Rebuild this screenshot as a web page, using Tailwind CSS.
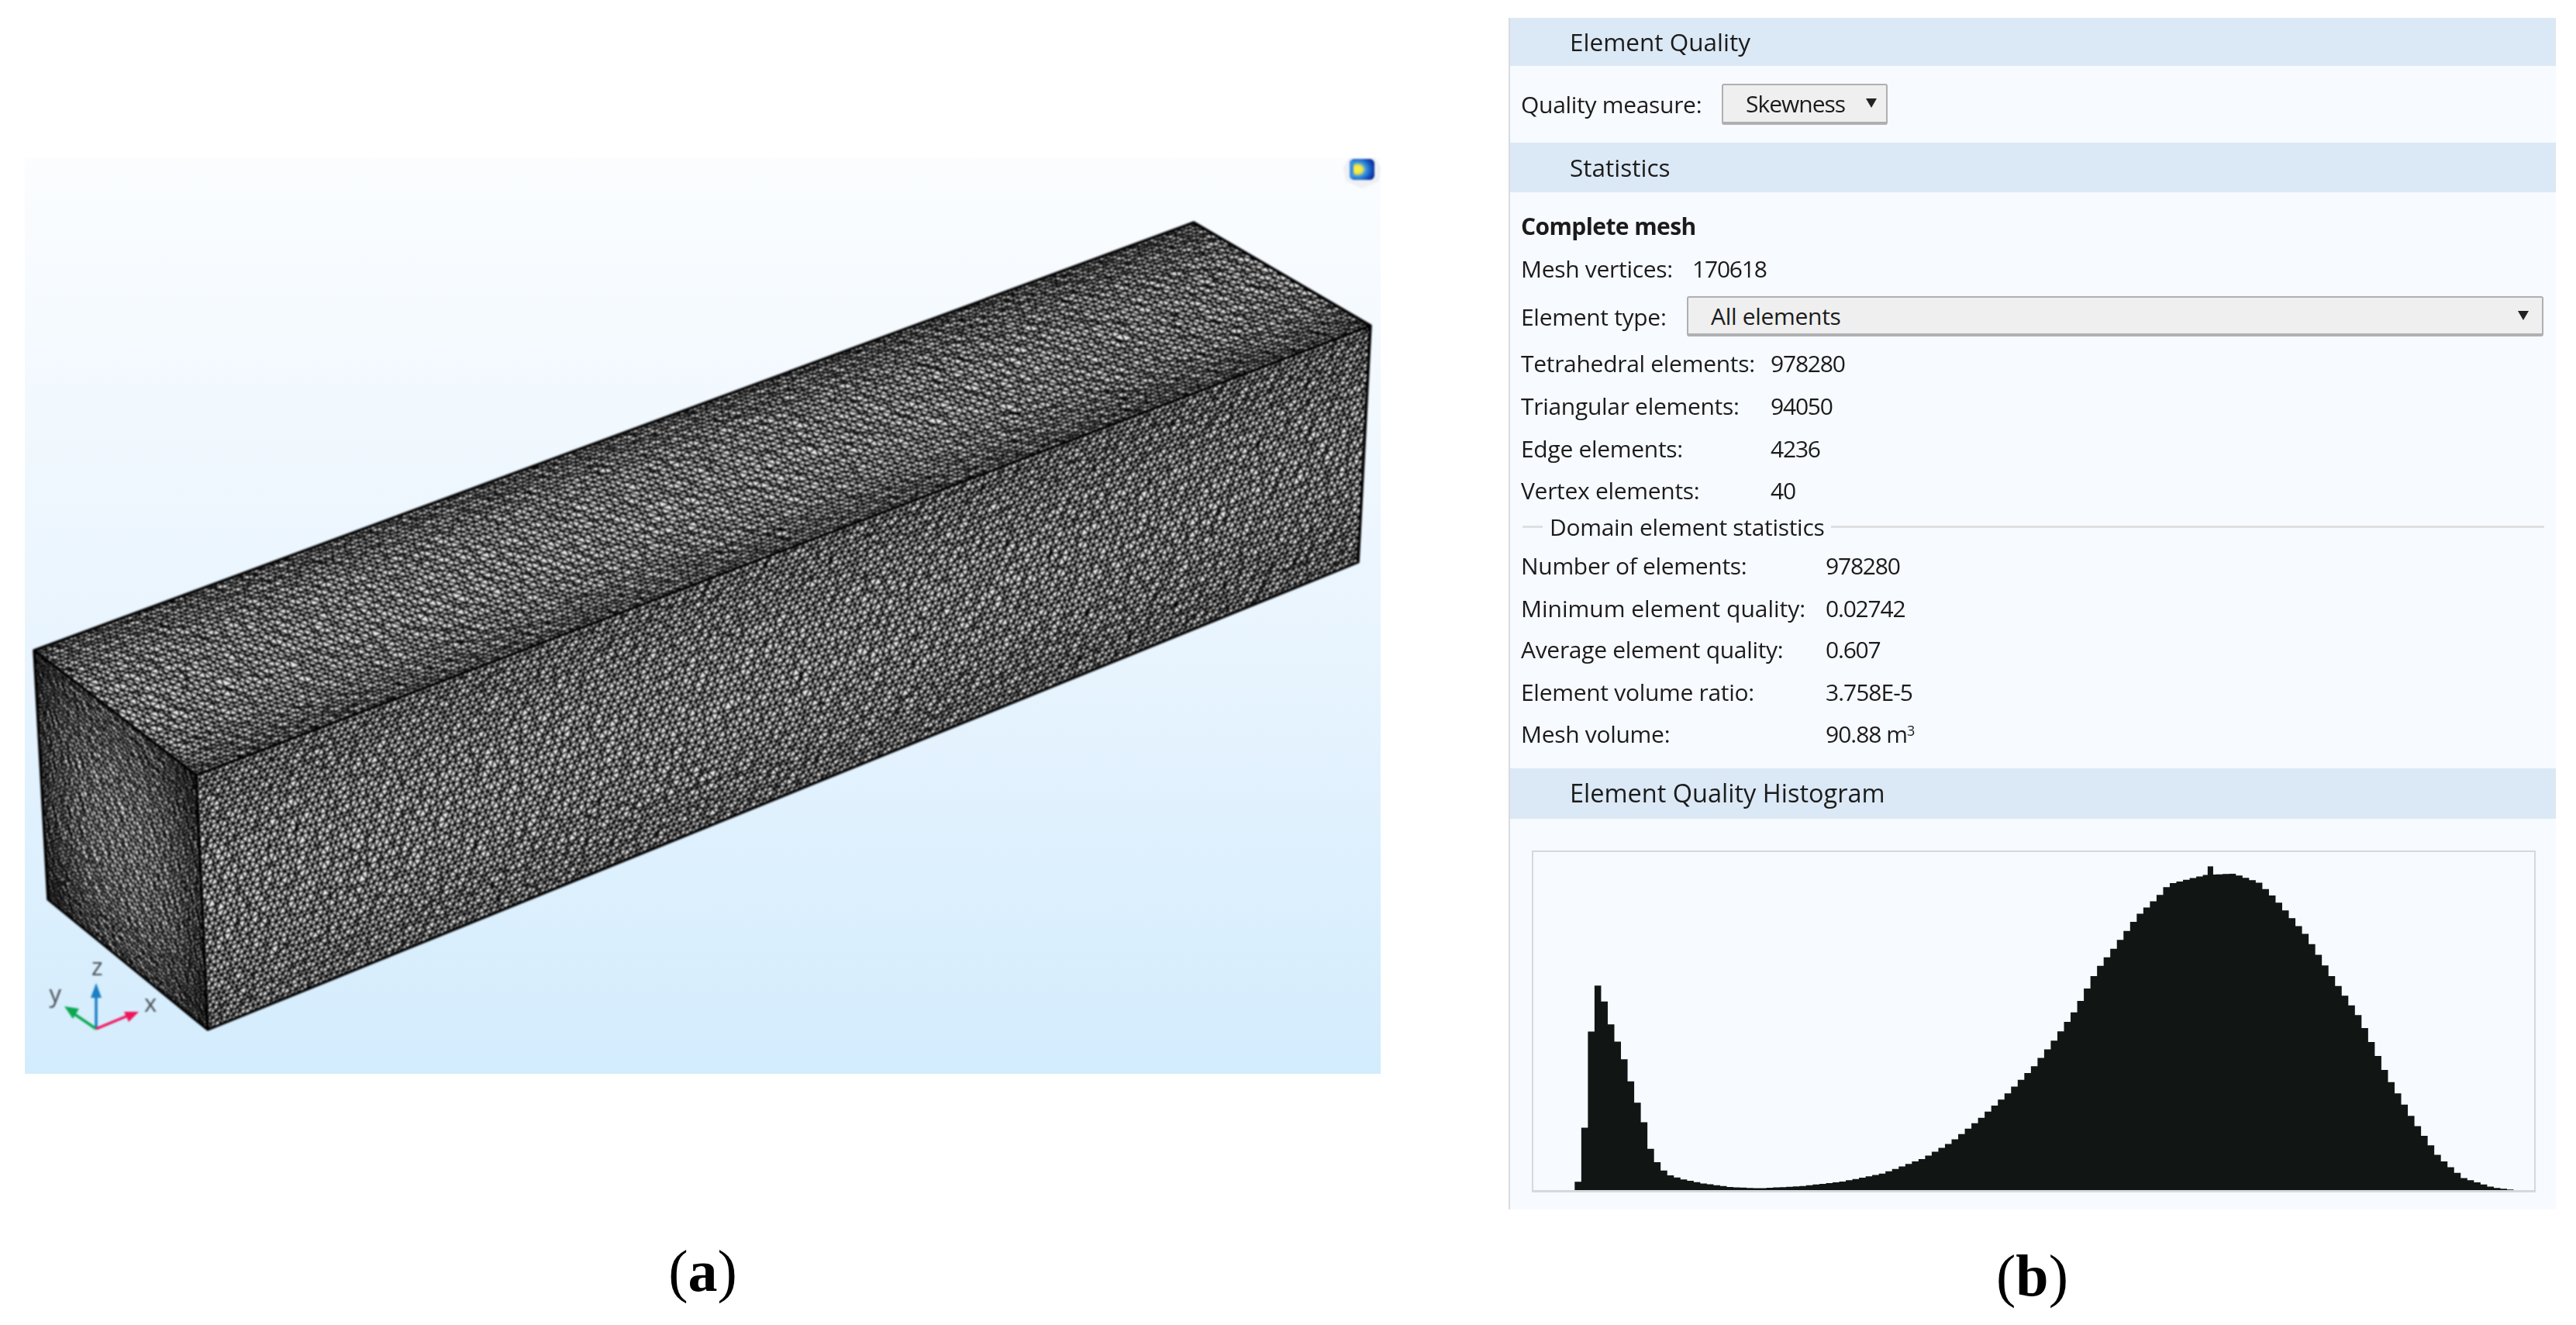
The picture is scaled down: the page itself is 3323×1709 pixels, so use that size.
<!DOCTYPE html>
<html lang="en">
  <head>
    <meta charset="UTF-8" />
    <title>Mesh quality figure</title>
    <script src="https://cdn.jsdelivr.net/npm/@tailwindcss/browser@4"></script>
  </head>
  <body class="bg-white">
    <div class="flex w-[3323px] h-[1709px] overflow-hidden bg-white font-['Open_Sans',sans-serif] text-[30px] tracking-[-0.3px] text-[#1b1b1b]">
      <!-- (a) mesh view -->
      <div class="w-[1946px] pl-[32px] pt-[203px] shrink-0">
        <div class="w-[1749px] h-[1182px] bg-gradient-to-b from-[#fbfdff] via-[#eaf5fe] to-[#d3ecfd]">
          <svg id="meshView" class="block blur-[0.9px]" width="1749" height="1182" viewBox="32 203 1749 1182">
            <polygon points="44,839 1540,287 1768,420 1752,725 268,1328 62,1160" fill="#ececec" />
            <path id="meshTop" fill="none" stroke="#000" stroke-width="1.65" />
            <path id="meshRight" fill="none" stroke="#000" stroke-width="1.75" />
            <path id="meshLeft" fill="none" stroke="#000" stroke-width="1.4" />
            <path d="M44 839 L1540 287 L1768 420 L1752 725 L268 1328 L62 1160 Z M44 839 L253 1000 L1768 420 M253 1000 L268 1328" fill="none" stroke="#000" stroke-width="3.5" stroke-linejoin="round" />
            <!-- axis triad -->
            <g stroke-width="3.5" fill="none">
              <path d="M124 1327 L124 1280" stroke="#1b7fc4" />
              <path d="M124 1327 L96 1308" stroke="#0aa84f" />
              <path d="M124 1327 L165 1310" stroke="#f0145a" />
            </g>
            <polygon points="124,1268 131,1287 117,1287" fill="#1b7fc4" />
            <polygon points="83,1298 102,1301 94,1314" fill="#0aa84f" />
            <polygon points="179,1305 166,1318 160,1305" fill="#f0145a" />
            <g font-family="'Open Sans',sans-serif" font-size="31" fill="#4a4f55" text-anchor="middle">
              <text x="125" y="1258">z</text>
              <text x="71" y="1293">y</text>
              <text x="194" y="1305">x</text>
            </g>
            <!-- logo badge -->
            <defs>
              <radialGradient id="logoFill" cx="0.32" cy="0.5" r="0.72">
                <stop offset="0" stop-color="#fff23a" />
                <stop offset="0.26" stop-color="#f4e64a" />
                <stop offset="0.46" stop-color="#3f9be0" />
                <stop offset="0.76" stop-color="#1455c4" />
                <stop offset="1" stop-color="#0a2a90" />
              </radialGradient>
            </defs>
            <path d="M1740 204 L1774 204 L1781 216 L1779 234 L1757 243 L1736 234 L1733 216 Z" fill="#eef0f3" />
            <rect x="1741" y="205" width="32" height="27" rx="6" fill="url(#logoFill)" />
            <rect x="1741" y="207" width="5" height="23" rx="2" fill="#3f8fe0" />
          </svg>
        </div>
        <div class="w-[1749px] mt-[212px] text-center font-['Liberation_Serif',serif] text-[76px] leading-[84px] tracking-normal text-black">(<b>a</b>)</div>
      </div>

      <!-- (b) statistics panel -->
      <div class="w-[1351px] pt-[23px] shrink-0">
        <div class="h-[1537px] border-l-2 border-[#d9dcdf] bg-[#f7fafe]">
          <div class="blur-[0.5px]">
            <div class="flex items-center h-[62px] pl-[77px] bg-[#dbe8f5] text-[31.5px] tracking-normal">Element Quality</div>
            <div class="flex items-center h-[99px] pl-[14px]">
              <span class="w-[259px]">Quality measure:</span>
              <div class="relative flex items-center w-[214px] h-[53px] pl-[29px] rounded-[3px] border-2 border-b-4 border-[#aeb0b2] bg-[#efefef] tracking-[-1px]">
                Skewness
                <svg class="absolute right-[11px] top-[16px]" width="16" height="14" viewBox="0 0 16 14"><path d="M1 1 H15 L8 13 Z" fill="#222" /></svg>
              </div>
            </div>
            <div class="flex items-center h-[64px] pl-[77px] bg-[#dbe8f5] text-[31.5px] tracking-normal">Statistics</div>

            <div class="flex items-center h-[54px] mt-[16px] pl-[14px] font-bold tracking-[-0.6px]">Complete mesh</div>
            <div class="flex items-center h-[56px] pl-[14px]"><span class="w-[221px]">Mesh vertices:</span><span class="tracking-[-1.2px]">170618</span></div>
            <div class="flex items-center h-[68px] pl-[14px]">
              <span class="w-[214px]">Element type:</span>
              <div class="relative flex items-center w-[1105px] h-[52px] pl-[29px] rounded-[3px] border-2 border-b-4 border-[#aeb0b2] bg-[#efefef]">
                All elements
                <svg class="absolute right-[16px] top-[16px]" width="16" height="14" viewBox="0 0 16 14"><path d="M1 1 H15 L8 13 Z" fill="#222" /></svg>
              </div>
            </div>
            <div class="flex items-center h-[53px] pl-[14px]"><span class="w-[322px]">Tetrahedral elements:</span><span class="tracking-[-1.2px]">978280</span></div>
            <div class="flex items-center h-[56px] pl-[14px]"><span class="w-[322px]">Triangular elements:</span><span class="tracking-[-1.2px]">94050</span></div>
            <div class="flex items-center h-[54px] pl-[14px]"><span class="w-[322px]">Edge elements:</span><span class="tracking-[-1.2px]">4236</span></div>
            <div class="flex items-center h-[54px] pl-[14px]"><span class="w-[322px]">Vertex elements:</span><span class="tracking-[-1.2px]">40</span></div>

            <div class="flex items-center h-[40px] pl-[16px] pr-[15px]">
              <span class="w-[26px] h-[3px] bg-[#dfe0e1]"></span>
              <span class="ml-[9px] mr-[9px]">Domain element statistics</span>
              <span class="flex-1 h-[3px] bg-[#dfe0e1]"></span>
            </div>

            <div class="flex items-center h-[60px] pl-[14px]"><span class="w-[393px]">Number of elements:</span><span class="tracking-[-1.2px]">978280</span></div>
            <div class="flex items-center h-[50px] pl-[14px]"><span class="w-[393px] tracking-normal">Minimum element quality:</span><span class="tracking-[-1.2px]">0.02742</span></div>
            <div class="flex items-center h-[57px] pl-[14px]"><span class="w-[393px]">Average element quality:</span><span class="tracking-[-1.2px]">0.607</span></div>
            <div class="flex items-center h-[53px] pl-[14px]"><span class="w-[393px]">Element volume ratio:</span><span class="tracking-[-1px]">3.758E-5</span></div>
            <div class="flex items-center h-[55px] pl-[14px]"><span class="w-[393px]">Mesh volume:</span><span class="tracking-[-1px]">90.88 m<sup class="text-[18px]">3</sup></span></div>

            <div class="flex items-center h-[65px] mt-[17px] pl-[77px] bg-[#dbe8f5] text-[32.5px] tracking-normal">Element Quality Histogram</div>
          </div>
          <div class="w-[1295px] h-[441px] mt-[41px] ml-[28px] border-2 border-b-[3px] border-[#d6d9dc]">
            <svg id="histogram" class="block w-full h-full blur-[0.7px]" viewBox="52 -8 1453 1136" preserveAspectRatio="none">
              <path id="histogramBars" fill="#111513" />
              <rect x="1031" y="40" width="8" height="40" fill="#111513" />
            </svg>
          </div>
        </div>
        <div class="mt-[43px] text-center font-['Liberation_Serif',serif] text-[76px] leading-[84px] tracking-normal text-black">(<b>b</b>)</div>
      </div>
    </div>

    <script>
      // Small seeded random so the mesh is the same on every run
      let seed = 20817;
      function rand() {
        seed = (seed + 0x6d2b79f5) | 0;
        let t = Math.imul(seed ^ (seed >>> 15), 1 | seed);
        t = (t + Math.imul(t ^ (t >>> 7), 61 | t)) ^ t;
        return ((t ^ (t >>> 14)) >>> 0) / 4294967296;
      }

      // Elements get finer near the box edges
      function grade(t, amount) {
        return t - (amount * Math.sin(2 * Math.PI * t)) / (2 * Math.PI);
      }

      // Jittered triangle lattice mapped on a four-corner face
      function meshFace(id, a, b, c, d, nu, nv, jitter, gradeU, gradeV) {
        const pts = [];
        for (let j = 0; j <= nv; j++) {
          const row = [];
          for (let i = 0; i <= nu; i++) {
            const edgeV = j === 0 || j === nv;
            const edgeU = i === 0 || i === nu;
            let u = (i + (j % 2 ? 0.5 : 0)) / nu;
            let v = j / nv;
            if (!edgeU) u += ((rand() - 0.5) * jitter) / nu;
            if (!edgeV) v += ((rand() - 0.5) * jitter) / nv;
            u = grade(Math.min(1, u), gradeU);
            v = grade(v, gradeV);
            const x = (1 - v) * ((1 - u) * a[0] + u * b[0]) + v * ((1 - u) * d[0] + u * c[0]);
            const y = (1 - v) * ((1 - u) * a[1] + u * b[1]) + v * ((1 - u) * d[1] + u * c[1]);
            row.push(x.toFixed(1) + " " + y.toFixed(1));
          }
          pts.push(row);
        }
        const parts = [];
        for (let j = 0; j <= nv; j++) {
          for (let i = 0; i <= nu; i++) {
            if (i < nu) parts.push("M" + pts[j][i] + "L" + pts[j][i + 1]);
            if (j < nv) {
              parts.push("M" + pts[j][i] + "L" + pts[j + 1][i]);
              const k = j % 2 ? i + 1 : i - 1;
              if (k >= 0 && k <= nu) parts.push("M" + pts[j][i] + "L" + pts[j + 1][k]);
            }
          }
        }
        document.getElementById(id).setAttribute("d", parts.join(""));
      }

      meshFace("meshTop", [44, 839], [1540, 287], [1768, 420], [253, 1000], 180, 34, 0.55, 0.03, 0.3);
      meshFace("meshRight", [253, 1000], [1768, 420], [1752, 725], [268, 1328], 185, 42, 0.55, 0.03, 0.15);
      meshFace("meshLeft", [44, 839], [253, 1000], [268, 1328], [62, 1160], 42, 50, 0.55, 0.3, 0.25);

      // Histogram outline, read off the reference
      const knots = [
        [112, 1100], [122, 1100], [123, 920], [132, 915], [133, 595], [141, 595], [142, 437], [150, 445],
        [160, 540], [170, 605], [180, 660], [190, 730], [200, 820], [210, 865], [218, 965], [228, 1020],
        [238, 1055], [250, 1078], [270, 1092], [300, 1106], [340, 1118], [380, 1122], [440, 1115],
        [500, 1100], [560, 1072], [620, 1020], [660, 965], [700, 890], [740, 805], [780, 710], [810, 620],
        [840, 520], [870, 390], [900, 300], [930, 205], [960, 140], [975, 100], [1000, 85], [1030, 68],
        [1070, 65], [1106, 95], [1130, 150], [1174, 270], [1212, 412], [1252, 548], [1291, 739],
        [1330, 893], [1367, 1017], [1402, 1087], [1447, 1120], [1477, 1128],
      ];
      function heightAt(x) {
        for (let i = 1; i < knots.length; i++) {
          if (x <= knots[i][0]) {
            const [x0, y0] = knots[i - 1];
            const [x1, y1] = knots[i];
            return y0 + ((y1 - y0) * (x - x0)) / (x1 - x0);
          }
        }
        return 1128;
      }
      let bars = "M112 1128";
      for (let x = 112; x < 1477; x += 9.6) {
        const y = heightAt(x + 4.8).toFixed(1);
        bars += "L" + x.toFixed(1) + " " + y + "L" + (x + 9.6).toFixed(1) + " " + y;
      }
      document.getElementById("histogramBars").setAttribute("d", bars + "L1477 1128Z");
    </script>
  </body>
</html>
